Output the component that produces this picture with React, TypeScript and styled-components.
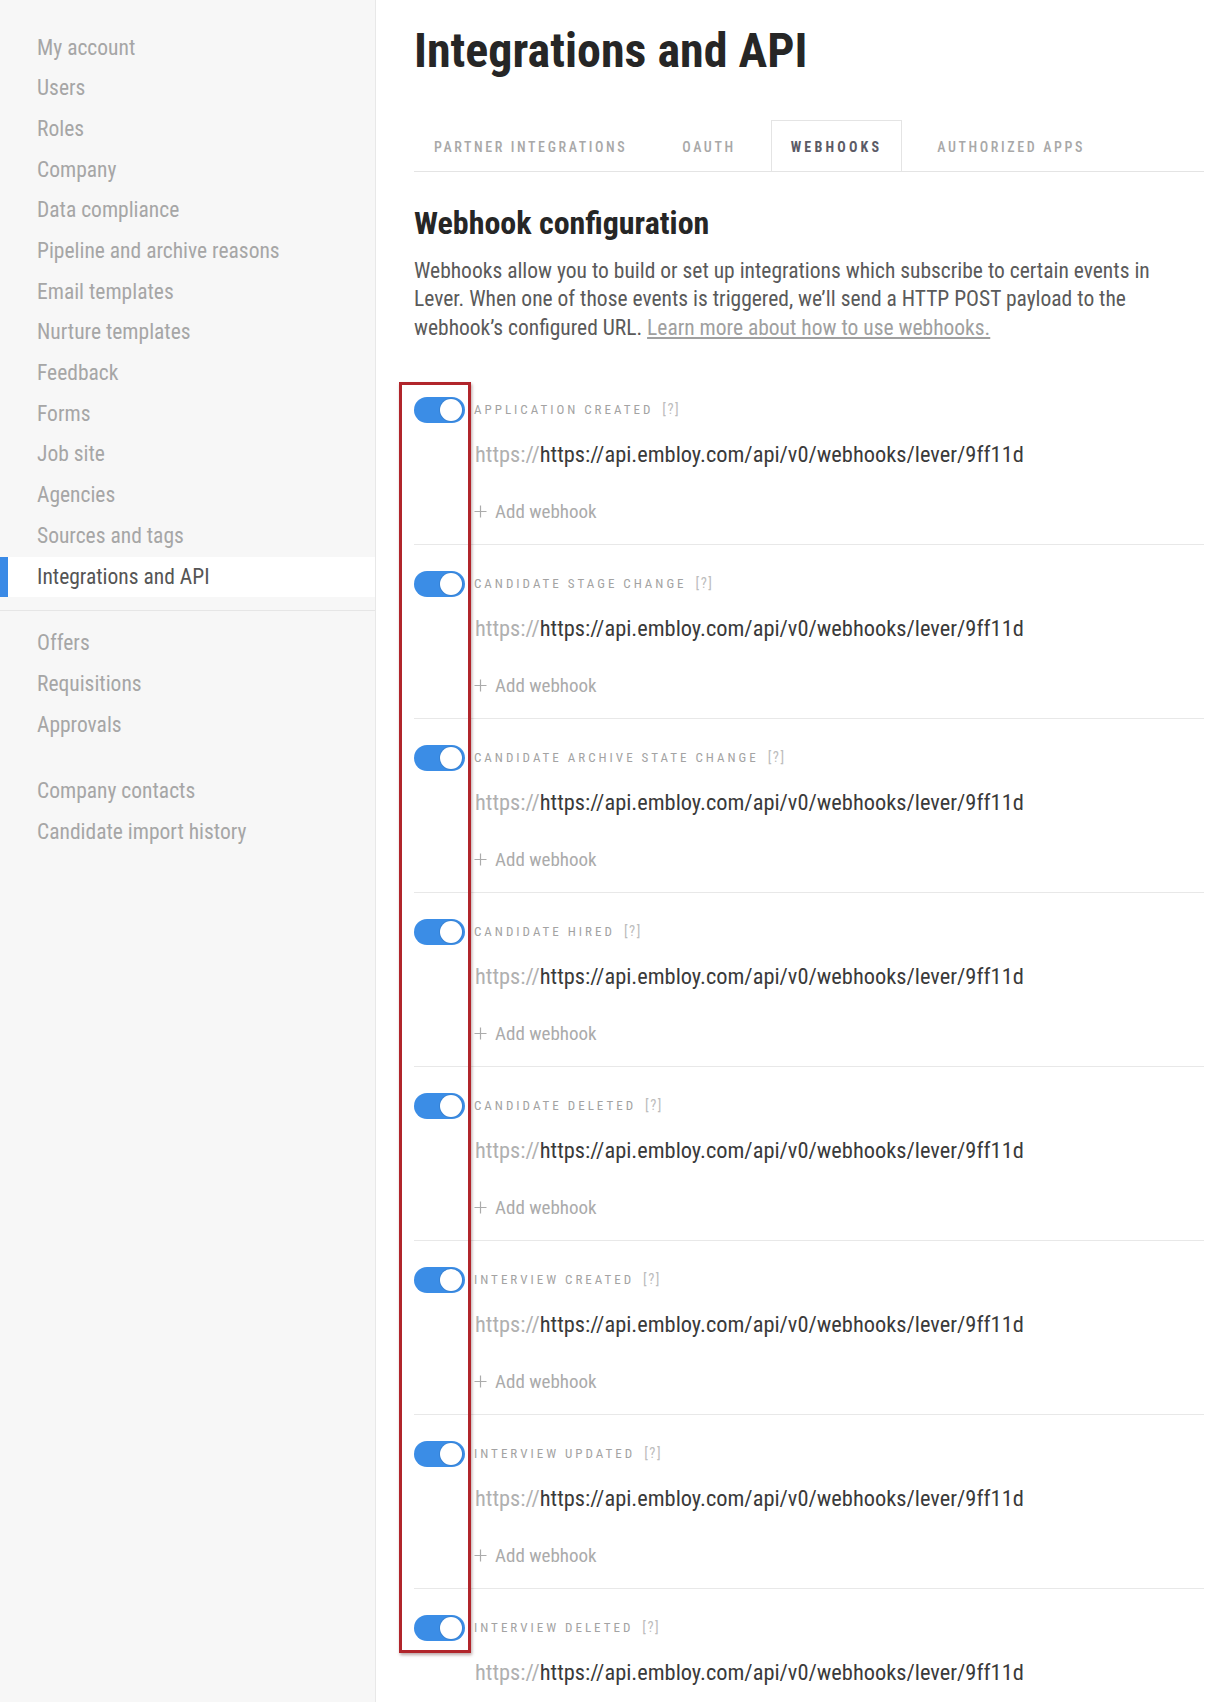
import { ReactNode } from 'react'
import styled, { createGlobalStyle } from 'styled-components'

const GlobalStyle = createGlobalStyle`
  body {
    margin: 0;
    background: #ffffff;
    font-family: 'Roboto Condensed', Roboto, 'Liberation Sans', sans-serif;
  }
`

const Page = styled.div`
  display: flex;
  min-height: 1702px;
  width: 1208px;
`

const Sidebar = styled.nav`
  flex: 0 0 376px;
  box-sizing: border-box;
  background: #f7f7f7;
  border-right: 1px solid #e8e8e8;
  padding-top: 27.6px;
`

const NavGroup = styled.div<{ divided?: boolean; spaced?: boolean }>`
  padding-bottom: ${({ divided }) => (divided ? '12.6px' : '0')};
  border-bottom: ${({ divided }) => (divided ? '1px solid #e6e6e6' : 'none')};
  padding-top: ${({ spaced }) => (spaced ? '25.7px' : '0')};
  &:nth-child(2) {
    padding-top: 12.6px;
  }
`

const NavItem = styled.a<{ active?: boolean }>`
  display: block;
  height: 40.7px;
  line-height: 40.7px;
  padding-left: 37px;
  font-size: 21.5px;
  color: ${({ active }) => (active ? '#555555' : '#a6a6a6')};
  background: ${({ active }) => (active ? '#ffffff' : 'transparent')};
  box-shadow: ${({ active }) => (active ? 'inset 8px 0 0 #3a8ae6' : 'none')};
  text-decoration: none;
  white-space: nowrap;
`

const Main = styled.main`
  flex: 1;
  padding: 22px 4px 0 38px;
  min-width: 0;
`

const Title = styled.h1`
  margin: 0;
  font-size: 48px;
  line-height: 58px;
  font-weight: 700;
  color: #262626;
`

const TabBar = styled.div`
  display: flex;
  gap: 15px;
  margin-top: 40px;
  border-bottom: 1px solid #e4e4e4;
`

const Tab = styled.div<{ active?: boolean }>`
  height: 51px;
  line-height: 52px;
  padding: 0 19px;
  font-size: 14px;
  letter-spacing: ${({ active }) => (active ? '3.2px' : '2.6px')};
  text-transform: uppercase;
  font-weight: ${({ active }) => (active ? 700 : 500)};
  color: ${({ active }) => (active ? '#5b5b66' : '#a8a8a8')};
  box-sizing: border-box;
  border: 1px solid ${({ active }) => (active ? '#e4e4e4' : 'transparent')};
  border-bottom: none;
  white-space: nowrap;
`

const Heading = styled.h2`
  margin: 31px 0 0;
  font-size: 32px;
  line-height: 40px;
  font-weight: 700;
  color: #262626;
`

const Intro = styled.p`
  margin: 14px 0 0;
  max-width: 770px;
  font-size: 21.5px;
  line-height: 28.3px;
  color: #5a5a5a;
`

const LearnLink = styled.a`
  color: #a0a0a0;
  text-decoration: underline;
`

const List = styled.div`
  position: relative;
  margin-top: 29px;
`

const Row = styled.div`
  display: flex;
  gap: 9px;
  padding: 26px 0 20.5px;
  border-bottom: 1px solid #e8e8e8;
`

const Toggle = styled.span<{ on?: boolean }>`
  position: relative;
  flex: 0 0 51px;
  height: 26px;
  border-radius: 13px;
  background: ${({ on }) => (on ? '#3b8de6' : '#d6d6d6')};

  &::after {
    content: '';
    position: absolute;
    top: 2px;
    ${({ on }) => (on ? 'right: 3px;' : 'left: 3px;')}
    width: 22px;
    height: 22px;
    border-radius: 50%;
    background: #ffffff;
    box-shadow: 0 0 0 1px rgba(0, 0, 0, 0.08);
  }
`

const RowBody = styled.div`
  flex: 1;
  min-width: 0;
`

const EventLabel = styled.div`
  height: 26px;
  line-height: 26px;
  font-size: 13px;
  letter-spacing: 3px;
  text-transform: uppercase;
  color: #a3a3a3;
  white-space: nowrap;
`

const Help = styled.span`
  margin-left: 9px;
  font-size: 14.5px;
  letter-spacing: 1.5px;
  color: #bdbdbd;
`

const UrlField = styled.div`
  margin-top: 13px;
  width: 552px;
  height: 36px;
  line-height: 36px;
  padding-left: 1px;
  font-size: 22.4px;
  color: #3a3a3a;
  overflow: hidden;
  white-space: nowrap;
`

const Scheme = styled.span`
  color: #b0b0b0;
`

const AddLink = styled.div`
  display: flex;
  align-items: center;
  gap: 8px;
  margin-top: 27.5px;
  height: 24px;
  font-size: 19px;
  color: #ababab;
`

const Highlight = styled.div`
  position: absolute;
  top: 11px;
  left: -15px;
  width: 72px;
  height: 1271px;
  box-sizing: border-box;
  border: 3px solid #b1252b;
  box-shadow: 1px 2px 3px rgba(60, 0, 0, 0.35);
  pointer-events: none;
`

const navGroups: { items: string[]; divided?: boolean; spaced?: boolean }[] = [
  {
    items: [
      'My account',
      'Users',
      'Roles',
      'Company',
      'Data compliance',
      'Pipeline and archive reasons',
      'Email templates',
      'Nurture templates',
      'Feedback',
      'Forms',
      'Job site',
      'Agencies',
      'Sources and tags',
      'Integrations and API',
    ],
    divided: true,
  },
  { items: ['Offers', 'Requisitions', 'Approvals'] },
  { items: ['Company contacts', 'Candidate import history'], spaced: true },
]

const tabs = ['Partner integrations', 'OAuth', 'Webhooks', 'Authorized apps']

const events = [
  'Application created',
  'Candidate stage change',
  'Candidate archive state change',
  'Candidate hired',
  'Candidate deleted',
  'Interview created',
  'Interview updated',
  'Interview deleted',
]

const url = 'https://api.embloy.com/api/v0/webhooks/lever/9ff11d'

function PlusIcon() {
  return (
    <svg width="13" height="13" viewBox="0 0 13 13" fill="none">
      <path d="M6.5 0.5v12M0.5 6.5h12" stroke="#ababab" strokeWidth="1.2" />
    </svg>
  )
}

function WebhookRow({ label, children }: { label: string; children?: ReactNode }) {
  return (
    <Row>
      <Toggle on />
      <RowBody>
        <EventLabel>
          {label}
          <Help>[?]</Help>
        </EventLabel>
        <UrlField>
          <Scheme>https://</Scheme>
          {url}
        </UrlField>
        <AddLink>
          <PlusIcon />
          Add webhook
        </AddLink>
        {children}
      </RowBody>
    </Row>
  )
}

export default function App() {
  return (
    <>
      <GlobalStyle />
      <Page>
        <Sidebar>
          {navGroups.map((group, i) => (
            <NavGroup key={i} divided={group.divided} spaced={group.spaced}>
              {group.items.map((item) => (
                <NavItem key={item} active={item === 'Integrations and API'}>
                  {item}
                </NavItem>
              ))}
            </NavGroup>
          ))}
        </Sidebar>
        <Main>
          <Title>Integrations and API</Title>
          <TabBar>
            {tabs.map((tab) => (
              <Tab key={tab} active={tab === 'Webhooks'}>
                {tab}
              </Tab>
            ))}
          </TabBar>
          <Heading>Webhook configuration</Heading>
          <Intro>
            Webhooks allow you to build or set up integrations which subscribe to certain events in
            Lever. When one of those events is triggered, we’ll send a HTTP POST payload to the
            webhook’s configured URL. <LearnLink>Learn more about how to use webhooks.</LearnLink>
          </Intro>
          <List>
            {events.map((event) => (
              <WebhookRow key={event} label={event} />
            ))}
            <Highlight />
          </List>
        </Main>
      </Page>
    </>
  )
}
